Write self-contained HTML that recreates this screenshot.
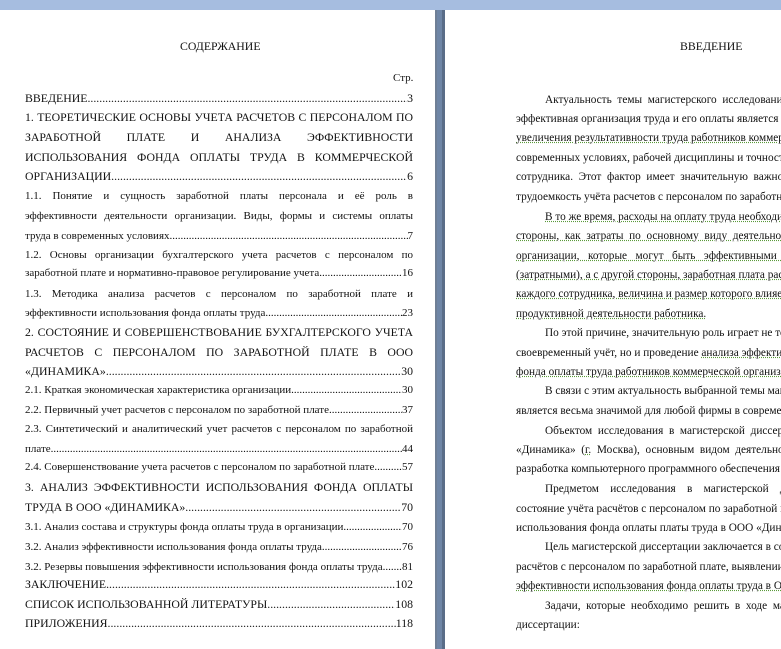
<!DOCTYPE html>
<html><head><meta charset="utf-8"><style>
html,body{margin:0;padding:0;width:781px;height:649px;overflow:hidden;background:linear-gradient(#a6bde0,#b8cbe6);position:relative;font-family:"Liberation Serif","DejaVu Serif",serif;color:#111}
.page{position:absolute;background:#fff;top:10px;height:660px}
#p1{left:0;width:435px;box-shadow:2px 0 0 #6f7f95,4px 0 0 #8c9cb3}
#p2{left:445px;width:336px;box-shadow:-3px 0 0 #5a6d88,-8px 0 0 #6f86a6}
#clip{position:absolute;left:445px;top:0;width:336px;height:649px;overflow:hidden}
#clip .l{margin-left:-445px}
.l{position:absolute;white-space:nowrap;font-size:11.8px;line-height:16px}
.s{font-size:11px}
.r{font-size:11.3px}
.j{text-align:justify;text-align-last:justify;white-space:normal;overflow:hidden;height:16px}
.d{display:flex;white-space:nowrap;overflow:hidden}
.d .f{flex:1;overflow:hidden;white-space:nowrap}
.d .f::after{content:"................................................................................................................................................................................................"}
.u{text-decoration:underline dotted #5a9a3a}
</style></head><body>
<div class="page" id="p1"></div>
<div class="page" id="p2"></div>

<div class="l" style="left:180px;top:38px">СОДЕРЖАНИЕ</div>
<div class="l" style="left:393px;top:70px;font-size:11px">Стр.</div>
<div class="l d" style="left:25px;top:90px;width:388px"><span>ВВЕДЕНИЕ</span><span class="f"></span><span>3</span></div>
<div class="l j" style="left:25px;top:109px;width:388px">1. ТЕОРЕТИЧЕСКИЕ ОСНОВЫ УЧЕТА РАСЧЕТОВ С ПЕРСОНАЛОМ ПО</div>
<div class="l j" style="left:25px;top:129px;width:388px">ЗАРАБОТНОЙ ПЛАТЕ И АНАЛИЗА ЭФФЕКТИВНОСТИ</div>
<div class="l j" style="left:25px;top:149px;width:388px">ИСПОЛЬЗОВАНИЯ ФОНДА ОПЛАТЫ ТРУДА В КОММЕРЧЕСКОЙ</div>
<div class="l d" style="left:25px;top:168px;width:388px"><span>ОРГАНИЗАЦИИ</span><span class="f"></span><span>6</span></div>
<div class="l s j" style="left:25px;top:188px;width:388px">1.1. Понятие и сущность заработной платы персонала и её роль в</div>
<div class="l s j" style="left:25px;top:208px;width:388px">эффективности деятельности организации. Виды, формы и системы оплаты</div>
<div class="l s d" style="left:25px;top:228px;width:388px"><span>труда в современных условиях</span><span class="f"></span><span>7</span></div>
<div class="l s j" style="left:25px;top:247px;width:388px">1.2. Основы организации бухгалтерского учета расчетов с персоналом по</div>
<div class="l s d" style="left:25px;top:265px;width:388px"><span>заработной плате и нормативно-правовое регулирование учета</span><span class="f"></span><span>16</span></div>
<div class="l s j" style="left:25px;top:286px;width:388px">1.3. Методика анализа расчетов с персоналом по заработной плате и</div>
<div class="l s d" style="left:25px;top:305px;width:388px"><span>эффективности использования фонда оплаты труда</span><span class="f"></span><span>23</span></div>
<div class="l j" style="left:25px;top:324px;width:388px">2. СОСТОЯНИЕ И СОВЕРШЕНСТВОВАНИЕ БУХГАЛТЕРСКОГО УЧЕТА</div>
<div class="l j" style="left:25px;top:344px;width:388px">РАСЧЕТОВ С ПЕРСОНАЛОМ ПО ЗАРАБОТНОЙ ПЛАТЕ В ООО</div>
<div class="l d" style="left:25px;top:363px;width:388px"><span>«ДИНАМИКА»</span><span class="f"></span><span>30</span></div>
<div class="l s d" style="left:25px;top:382px;width:388px"><span>2.1. Краткая экономическая характеристика организации</span><span class="f"></span><span>30</span></div>
<div class="l s d" style="left:25px;top:402px;width:388px"><span>2.2. Первичный учет расчетов с персоналом по заработной плате</span><span class="f"></span><span>37</span></div>
<div class="l s j" style="left:25px;top:421px;width:388px">2.3. Синтетический и аналитический учет расчетов с персоналом по заработной</div>
<div class="l s d" style="left:25px;top:441px;width:388px"><span>плате</span><span class="f"></span><span>44</span></div>
<div class="l s d" style="left:25px;top:459px;width:388px"><span>2.4. Совершенствование учета расчетов с персоналом по заработной плате</span><span class="f"></span><span>57</span></div>
<div class="l j" style="left:25px;top:479px;width:388px">3. АНАЛИЗ ЭФФЕКТИВНОСТИ ИСПОЛЬЗОВАНИЯ ФОНДА ОПЛАТЫ</div>
<div class="l d" style="left:25px;top:499px;width:388px"><span>ТРУДА В ООО «ДИНАМИКА»</span><span class="f"></span><span>70</span></div>
<div class="l s d" style="left:25px;top:519px;width:388px"><span>3.1. Анализ состава и структуры фонда оплаты труда в организации</span><span class="f"></span><span>70</span></div>
<div class="l s d" style="left:25px;top:539px;width:388px"><span>3.2. Анализ эффективности использования фонда оплаты труда</span><span class="f"></span><span>76</span></div>
<div class="l s d" style="left:25px;top:559px;width:388px"><span>3.2. Резервы повышения эффективности использования фонда оплаты труда</span><span class="f"></span><span>81</span></div>
<div class="l d" style="left:25px;top:576px;width:388px"><span>ЗАКЛЮЧЕНИЕ</span><span class="f"></span><span>102</span></div>
<div class="l d" style="left:25px;top:596px;width:388px"><span>СПИСОК ИСПОЛЬЗОВАННОЙ ЛИТЕРАТУРЫ</span><span class="f"></span><span>108</span></div>
<div class="l d" style="left:25px;top:615px;width:388px"><span>ПРИЛОЖЕНИЯ</span><span class="f"></span><span>118</span></div>

<div id="clip">
<div class="l" style="left:680px;top:38px">ВВЕДЕНИЕ</div>
<div class="l r" style="left:545px;top:92px">Актуальность&nbsp; темы&nbsp; магистерского&nbsp; исследования&nbsp; обусловлена</div>
<div class="l r" style="left:516px;top:111px">эффективная организация труда и его оплаты является одним из факторов</div>
<div class="l r u" style="left:516px;top:130px">увеличения результативности труда работников коммерческой организации</div>
<div class="l r" style="left:516px;top:150px">современных условиях, рабочей дисциплины и точности работы каждого</div>
<div class="l r" style="left:516px;top:169px">сотрудника.&nbsp; Этот&nbsp; фактор&nbsp; имеет&nbsp; значительную&nbsp; важность,&nbsp; так</div>
<div class="l r" style="left:516px;top:189px">трудоемкость учёта расчетов с персоналом по заработной плате высока.</div>
<div class="l r u" style="left:545px;top:209px">В то же время, расходы на оплату труда необходимо рассматривать</div>
<div class="l r u" style="left:516px;top:228px">стороны,&nbsp; как&nbsp; затраты&nbsp; по&nbsp; основному&nbsp; виду&nbsp; деятельности</div>
<div class="l r u" style="left:516px;top:248px">организации,&nbsp;&nbsp; которые&nbsp;&nbsp; могут&nbsp;&nbsp; быть&nbsp;&nbsp; эффективными&nbsp; или</div>
<div class="l r u" style="left:516px;top:267px">(затратными), а с другой стороны, заработная плата рассматривается</div>
<div class="l r u" style="left:516px;top:286px">каждого сотрудника, величина и размер которого влияет на стимулирование</div>
<div class="l r u" style="left:516px;top:306px">продуктивной деятельности работника.</div>
<div class="l r" style="left:545px;top:325px">По этой причине, значительную роль играет не только правильный</div>
<div class="l r" style="left:516px;top:345px">своевременный учёт, но и проведение <span class="u">анализа эффективности использования</span></div>
<div class="l r u" style="left:516px;top:364px">фонда оплаты труда работников коммерческой организации в целом.</div>
<div class="l r" style="left:545px;top:383px">В связи с этим актуальность выбранной темы магистерской диссертации</div>
<div class="l r" style="left:516px;top:403px">является весьма значимой для любой фирмы в современных условиях.</div>
<div class="l r" style="left:545px;top:423px">Объектом&nbsp; исследования&nbsp; в&nbsp; магистерской&nbsp; диссертации&nbsp; является</div>
<div class="l r" style="left:516px;top:442px">«Динамика»&nbsp; (<span class="u">г.</span>&nbsp; Москва),&nbsp; основным&nbsp; видом&nbsp; деятельности&nbsp; которого</div>
<div class="l r" style="left:516px;top:461px">разработка компьютерного программного обеспечения и консультирование.</div>
<div class="l r" style="left:545px;top:481px">Предметом&nbsp;&nbsp;&nbsp; исследования&nbsp;&nbsp;&nbsp; в&nbsp;&nbsp;&nbsp; магистерской&nbsp;&nbsp;&nbsp; диссертации&nbsp; является</div>
<div class="l r" style="left:516px;top:501px">состояние учёта расчётов с персоналом по заработной плате и эффективность</div>
<div class="l r" style="left:516px;top:520px">использования фонда оплаты платы труда в ООО «Динамика».</div>
<div class="l r" style="left:545px;top:539px">Цель магистерской диссертации заключается в совершенствовании</div>
<div class="l r" style="left:516px;top:559px">расчётов с персоналом по заработной плате, выявлении резервов повышения</div>
<div class="l r u" style="left:516px;top:578px">эффективности использования фонда оплаты труда в ООО «Динамика».</div>
<div class="l r" style="left:545px;top:598px">Задачи,&nbsp; которые&nbsp; необходимо&nbsp; решить&nbsp; в&nbsp; ходе&nbsp; магистерской</div>
<div class="l r" style="left:516px;top:617px">диссертации:</div>
</div>
</body></html>
